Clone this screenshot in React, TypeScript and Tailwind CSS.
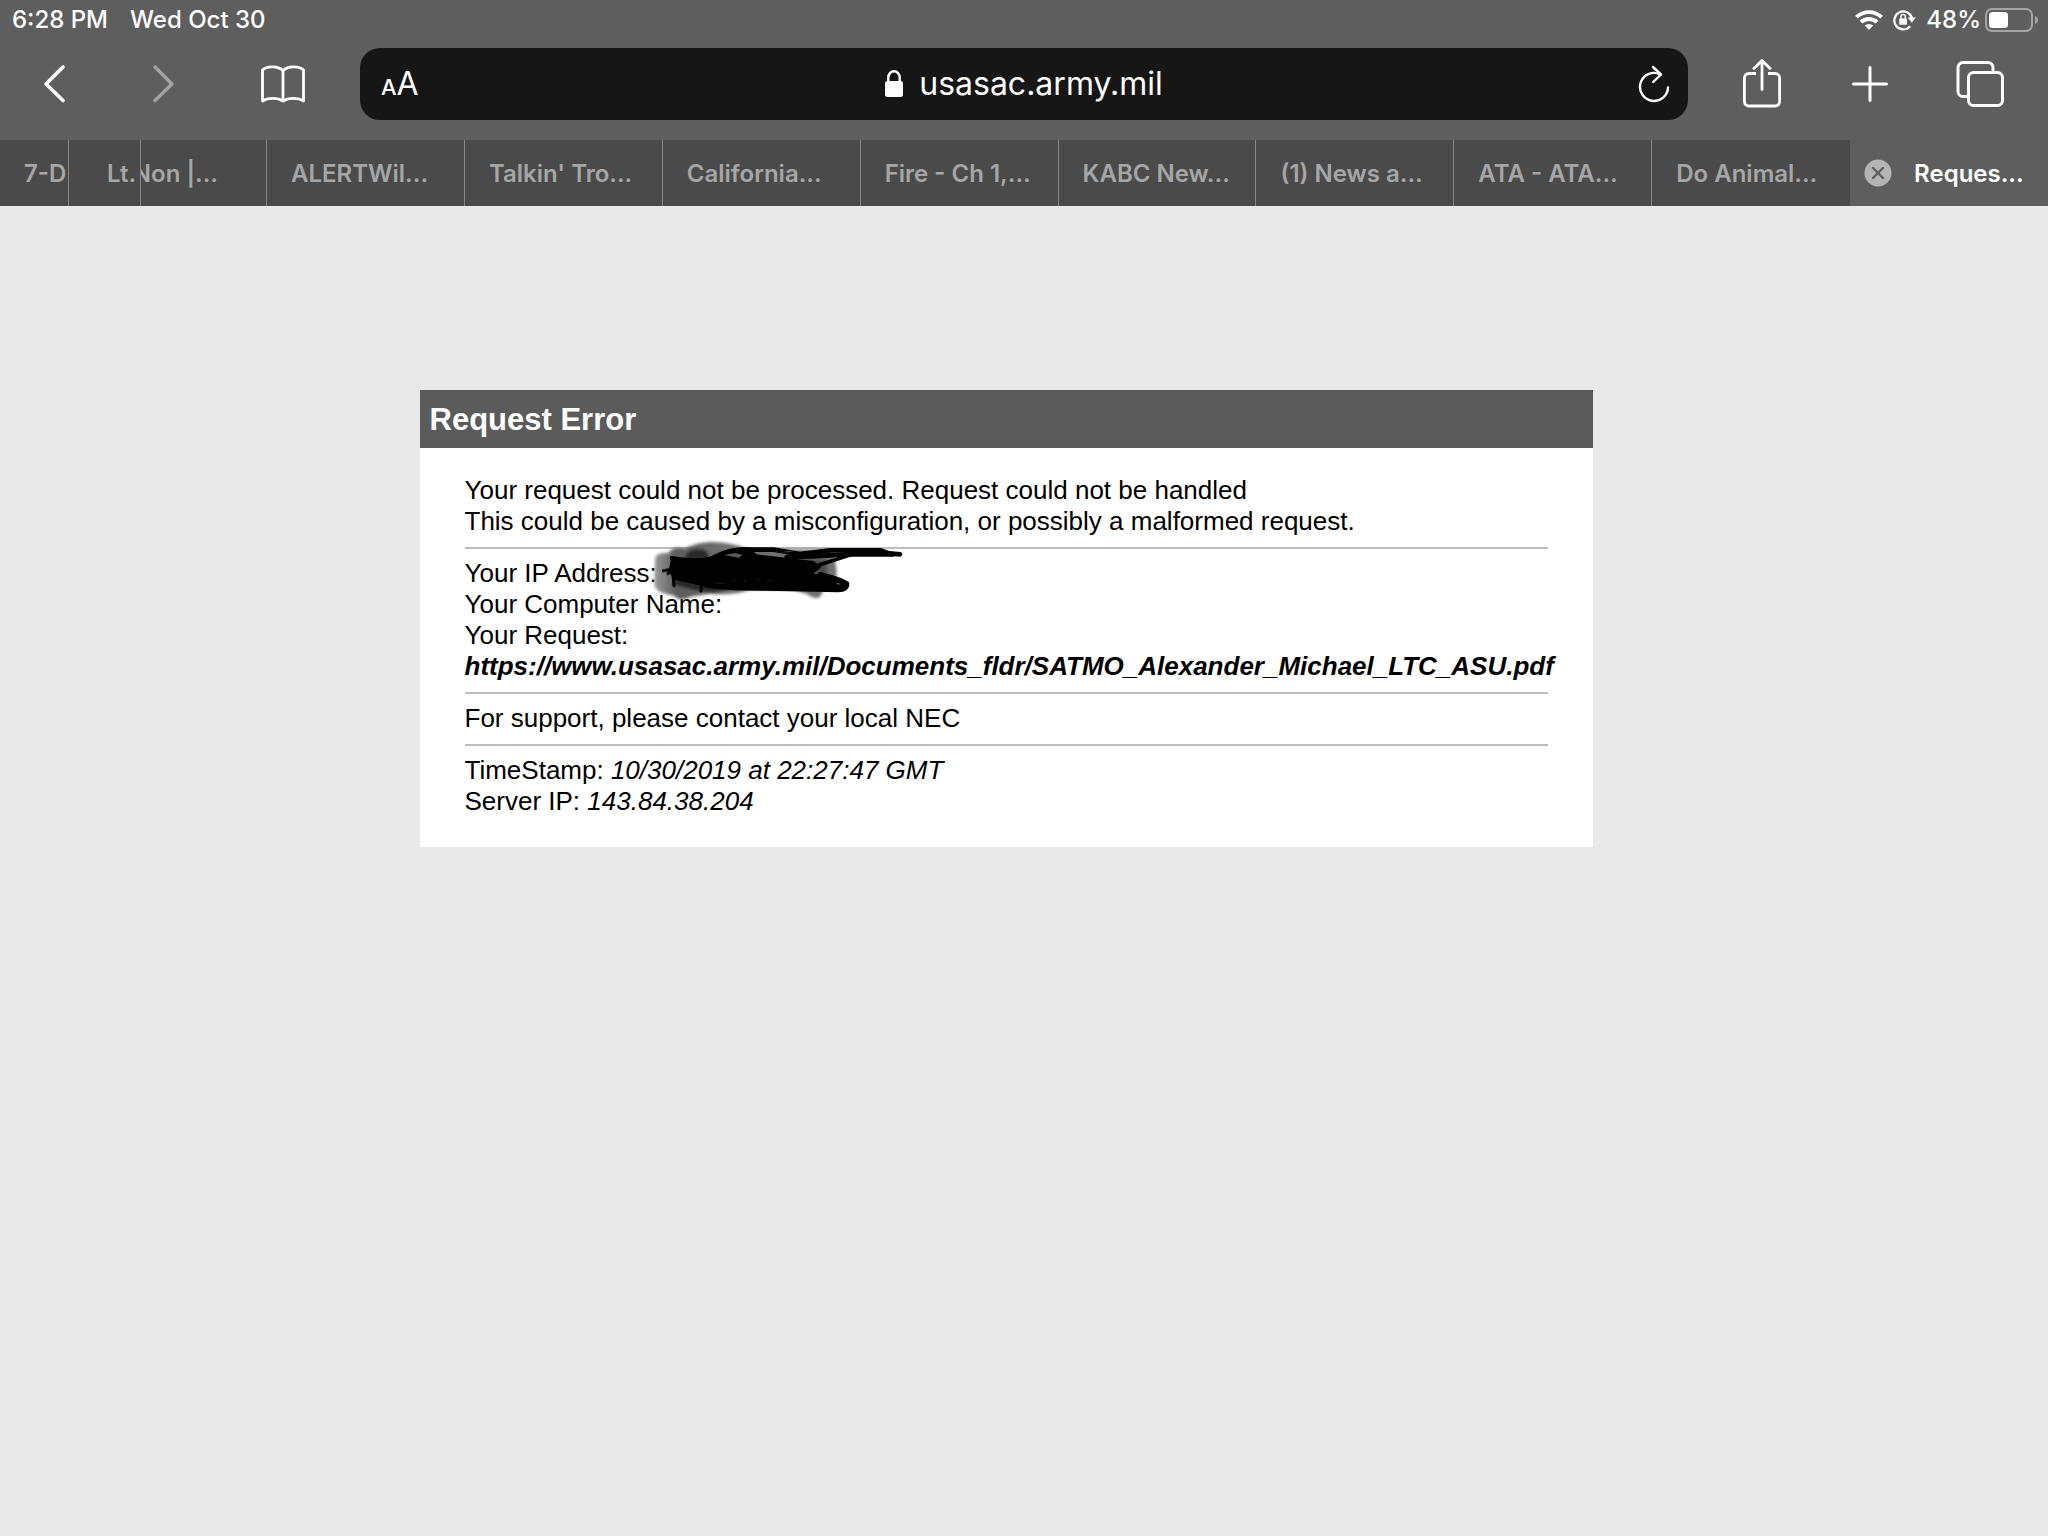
import type { ReactNode } from "react";

type IconButtonProps = {
    label: string;
    className?: string;
    disabled?: boolean;
    children: ReactNode;
}

type Tab = {
    title: string;
    className: string;
}

const tabs: Tab[] = [
    { title: "7-D", className: "border-r pl-6" },
    { title: "Lt.", className: "border-r pl-[38px]" },
    { title: "Non |...", className: "justify-end border-r pr-12" },
    { title: "ALERTWil...", className: "border-r pl-6" },
    { title: "Talkin' Tro...", className: "border-r pl-6" },
    { title: "California...", className: "border-r pl-6" },
    { title: "Fire - Ch 1,...", className: "border-r pl-6" },
    { title: "KABC New...", className: "border-r pl-6" },
    { title: "(1) News a...", className: "border-r pl-6" },
    { title: "ATA - ATA...", className: "border-r pl-6" },
    { title: "Do Animal...", className: "pl-6" },
];

function IconButton({ label, className = "", disabled = false, children }: IconButtonProps) {
    return (
        <button
            type="button"
            aria-label={label}
            disabled={disabled}
            className={`flex h-[72px] shrink-0 items-center justify-center ${className}`}>
            {children}
        </button>
    )
}

function StatusBar() {
    return (
        <div className="flex h-12 items-start justify-between pl-3 pr-[9px] pt-1 text-2xl leading-8 font-medium">
            <div className="flex gap-[22px]">
                <span>6:28 PM</span>
                <span>Wed Oct 30</span>
            </div>
            <div className="flex h-8 items-center">
                {/* WIFI */}
                <svg width="28" height="20" viewBox="0 0 28 20" className="mr-[10px]" fill="none" stroke="white" strokeWidth="3.8">
                    <path d="M1.4 7.2a18 18 0 0 1 25.200 0" />
                    <path d="M6 12.200a11.600 11.600 0 0 1 16 0" />
                    <path d="M14 20l-4.200-4.400a6 6 0 0 1 8.400 0z" fill="white" stroke="none" />
                </svg>
                {/* ROTATION LOCK */}
                <svg width="23" height="22" viewBox="0 0 23 22" className="mr-[10px]" fill="none">
                    <path d="M17.2 17.2A9 9 0 1 1 19 9" stroke="white" strokeWidth="2.200" />
                    <path d="M14.800 8.600h8l-4 5.200z" fill="white" />
                    <rect x="6.200" y="9.600" width="7.800" height="6.200" rx="1" fill="white" />
                    <path d="M7.900 10V7.800a2.200 2.200 0 0 1 4.400 0V10" stroke="white" strokeWidth="1.500" />
                </svg>
                <span>48%</span>
                {/* BATTERY */}
                <svg width="54" height="24" viewBox="0 0 54 24" className="ml-1">
                    <rect x="1" y="1" width="46" height="22" rx="6" fill="none" stroke="#a5a5a5" strokeWidth="2" />
                    <rect x="4" y="4" width="19" height="16" rx="3.500" fill="white" />
                    <path d="M50 8q3 1.200 3 4t-3 4z" fill="#a5a5a5" />
                </svg>
            </div>
        </div>
    )
}

function AddressBar() {
    return (
        <div className="grid h-[72px] flex-1 grid-cols-[1fr_auto_1fr] items-center rounded-[20px] bg-[#161616]">
            <button type="button" aria-label="Page settings" className="flex items-baseline justify-self-start pt-[3px] pl-[21px] leading-10">
                <span className="text-[22px] font-medium">A</span>
                <span className="text-[32px]">A</span>
            </button>
            <div className="flex items-center gap-4">
                <svg width="18" height="28" viewBox="0 0 18 28" fill="none">
                    <rect x="0" y="11" width="18" height="16" rx="2.500" fill="white" />
                    <path d="M3.300 13V7.500a5.700 6.200 0 0 1 11.400 0V13" stroke="white" strokeWidth="2.400" />
                </svg>
                <input
                    type="text"
                    aria-label="Address"
                    defaultValue="usasac.army.mil"
                    className="[field-sizing:content] bg-transparent text-[32px] leading-10 outline-none" />
            </div>
            <button type="button" aria-label="Reload" className="justify-self-end pr-[18px]">
                <svg width="32" height="38" viewBox="0 0 32 38" fill="none" stroke="white" strokeWidth="2.400" strokeLinecap="round" strokeLinejoin="round">
                    <path d="M30 22.500A14 14 0 1 1 22 9.300" />
                    <path d="M15 2l8 7.500-7.800 7.500" />
                </svg>
            </button>
        </div>
    )
}

function Toolbar() {
    return (
        <div className="flex items-center pb-5">
            <IconButton label="Back" className="w-[110px]">
                <svg width="24" height="40" viewBox="0 0 24 40" fill="none" stroke="white" strokeWidth="3.600" strokeLinecap="round" strokeLinejoin="round">
                    <path d="M20 3L3 20l17 16.500" />
                </svg>
            </IconButton>
            <IconButton label="Forward" className="w-[108px]" disabled>
                <svg width="24" height="40" viewBox="0 0 24 40" fill="none" stroke="#a3a3a3" strokeWidth="3.400" strokeLinecap="round" strokeLinejoin="round">
                    <path d="M3 3l17 17L3 36.500" />
                </svg>
            </IconButton>
            <IconButton label="Bookmarks" className="mr-3 w-[130px]">
                <svg width="46" height="40" viewBox="0 0 46 40" fill="none" stroke="white" strokeWidth="2.800" strokeLinejoin="round">
                    <path d="M23 6.500C18 1.800 7 1.500 2.500 6v31C8 33.500 17.500 33.500 23 37c5.500-3.500 15-3.500 20.500 0V6C39 1.500 28 1.800 23 6.500z" />
                    <path d="M23 6.500V37" />
                </svg>
            </IconButton>
            <AddressBar />
            <IconButton label="Share" className="w-[148px]">
                <svg width="40" height="50" viewBox="0 0 40 50" fill="none" stroke="white" strokeWidth="2.800" strokeLinecap="round" strokeLinejoin="round">
                    <path d="M14 14.500H7a4.600 4.600 0 0 0-4.600 4.600v23.300A4.600 4.600 0 0 0 7 47h26a4.600 4.600 0 0 0 4.600-4.600V19.100a4.600 4.600 0 0 0-4.600-4.600h-7" strokeLinecap="butt" />
                    <path d="M20 30.500V2M12 9.500l8-8 8 8" />
                </svg>
            </IconButton>
            <IconButton label="New tab" className="w-[68px]">
                <svg width="36" height="36" viewBox="0 0 36 36" fill="none" stroke="white" strokeWidth="3" strokeLinecap="round">
                    <path d="M18 1.500v33M1.500 18h33" />
                </svg>
            </IconButton>
            <IconButton label="Show all tabs" className="w-36 pl-2">
                <svg width="48" height="46" viewBox="0 0 48 46" fill="none" stroke="white" strokeWidth="3">
                    <path d="M12 35.500H7A5 5 0 0 1 2 30.500V6.500a5 5 0 0 1 5-5h25a5 5 0 0 1 5 5v5" />
                    <rect x="12.500" y="11.500" width="34" height="33" rx="5" />
                </svg>
            </IconButton>
        </div>
    )
}

function TabBar() {
    return (
        <div role="tablist" className="grid h-[66px] grid-cols-[69px_72px_126px_repeat(9,minmax(0,1fr))] text-2xl font-semibold">
            {tabs.map((tab) => (
                <button
                    key={tab.title}
                    type="button"
                    role="tab"
                    aria-selected={false}
                    className={`flex items-center overflow-hidden border-[#868686] bg-[#4a4a4a] pt-px whitespace-nowrap text-[#a6a6a6] ${tab.className}`}>
                    {tab.title}
                </button>
            ))}
            {/* ACTIVE TAB */}
            <div className="flex items-center gap-[22px] pl-[14px]">
                <button type="button" aria-label="Close tab">
                    <svg width="28" height="28" viewBox="0 0 28 28">
                        <circle cx="14" cy="14" r="13.500" fill="#b4b4b4" />
                        <path d="M9 9l10 10M19 9L9 19" stroke="#5e5e5e" strokeWidth="2.400" strokeLinecap="round" />
                    </svg>
                </button>
                <button type="button" role="tab" aria-selected={true} className="pt-px whitespace-nowrap">Reques...</button>
            </div>
        </div>
    )
}

// Marker strokes that hide the address
function Scribble() {
    return (
        <svg width="260" height="67" viewBox="150 48 780 201" className="absolute -left-[7px] -top-[21px] max-w-none" aria-hidden="true">
            <defs>
                <filter id="soft" x="-10%" y="-10%" width="120%" height="120%">
                    <feGaussianBlur stdDeviation="4" />
                </filter>
                <linearGradient id="halo" x1="0" x2="1">
                    <stop offset="0" stopColor="#9a9a9a" />
                    <stop offset="0.12" stopColor="#5c5c5c" />
                    <stop offset="0.4" stopColor="#707070" />
                    <stop offset="1" stopColor="#707070" />
                </linearGradient>
            </defs>
            <g filter="url(#soft)">
                <path d="M165 112Q168 94 205 96Q215 76 255 82Q300 62 335 63Q400 64 440 84L690 86Q710 110 710 165L680 190L660 228Q640 236 622 220L580 206H450Q400 224 330 218L270 228Q240 244 222 224Q165 216 163 190z" fill="url(#halo)" />
                <path d="M256 104Q270 78 300 84Q328 84 326 112L390 206L340 216Q270 210 218 190z" fill="#2a2a2a" />
                <path d="M600 112L680 116V170L630 170z" fill="#4c4c4c" />
            </g>
            <path d="M214 108Q300 120 350 106L400 88L450 84L470 100L540 108L640 120L664 138L640 158L700 166L742 188L735 210L700 208H400L320 198L222 176L206 150z" fill="black" />
            <g fill="none" stroke="black" strokeLinecap="round" strokeLinejoin="round" strokeWidth="14">
                <path d="M216 112Q310 130 350 105Q400 80 455 86H520L600 99L690 88H842L868 97L900 100" />
                <path d="M560 108L640 106L740 100H880" />
                <path d="M410 92L460 112L560 128L650 134L750 102" strokeWidth="11" />
                <path d="M190 149L220 144L204 158M218 150L222 194M306 174L303 210" strokeWidth="9" />
                <path d="M320 194Q380 202 500 202L715 207Q742 206 741 188Q720 174 660 160" />
            </g>
            <path d="M372 102l34-6 22 6-12 8zM540 94l50-6-26 6z" fill="#5a5a5a" />
            <path d="M706 184l16 4-6 4z" fill="#555" />
            <path d="M345 186l26 2M400 180l8-3M432 180l8-3M468 176l10-2M500 180l20-3" stroke="#2c2c2c" strokeWidth="2" />
        </svg>
    )
}

function Divider() {
    return <hr className="mt-[10px] mb-[9px] border-t-2 border-[#bdbdbd]" />
}

function ErrorCard() {
    return (
        <section className="w-[1173px] max-w-full bg-white">
            <h1 className="bg-[#5b5b5b] px-[10px] pt-3 pb-[10px] text-[31px] leading-9 font-bold text-white">
                Request Error
            </h1>
            <div className="px-[45px] pt-[27px] pb-[30px] text-[26px] leading-[31px] text-black">
                <p>Your request could not be processed. Request could not be handled</p>
                <p>This could be caused by a misconfiguration, or possibly a malformed request.</p>
                <Divider />
                <p>Your IP Address:<span className="relative inline-block h-6 align-top"><Scribble /></span></p>
                <p>Your Computer Name:</p>
                <p>Your Request:</p>
                <p className="font-bold italic whitespace-nowrap">
                    https://www.usasac.army.mil/Documents_fldr/SATMO_Alexander_Michael_LTC_ASU.pdf
                </p>
                <Divider />
                <p>For support, please contact your local NEC</p>
                <Divider />
                <p>TimeStamp: <em>10/30/2019 at 22:27:47 GMT</em></p>
                <p>Server IP: <em>143.84.38.204</em></p>
            </div>
        </section>
    )
}

export default function App() {
    return (
        <div className="flex min-h-screen flex-col bg-[#e9e9e9]">
            <header className="bg-[#5e5e5e] font-['Inter',sans-serif] text-white">
                <StatusBar />
                <Toolbar />
                <TabBar />
            </header>
            <main className="flex flex-1 justify-center pt-[184px] pr-9 font-['Liberation_Sans',Arial,sans-serif]">
                <div>
                    <ErrorCard />
                </div>
            </main>
        </div>
    )
}
